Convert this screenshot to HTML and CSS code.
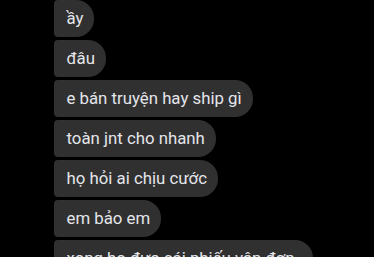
FILE: index.html
```html
<!DOCTYPE html>
<html>
  <head>
    <meta charset="utf-8">
    <title>Tin nhắn</title>
    <link rel="stylesheet" href="styles.css">
  </head>
  <body>
    <div class="thread">
      <div class="msg">ầy</div>
      <div class="msg">đâu</div>
      <div class="msg">e bán truyện hay ship gì</div>
      <div class="msg">toàn jnt cho nhanh</div>
      <div class="msg">họ hỏi ai chịu cước</div>
      <div class="msg">em bảo em</div>
      <div class="msg msg-wide">xong họ đưa cái phiếu vận đơn</div>
    </div>
  </body>
</html>
```

FILE: styles.css
```css
*, *::before, *::after {
  padding: 0;
  margin: 0;
  box-sizing: border-box;
}

body {
  background: #000;
  font-family: Roboto, "Noto Sans", sans-serif;
  height: 257px;
  overflow: hidden;
}

.thread {
  display: flex;
  flex-direction: column;
  align-items: flex-start;
  gap: 3px;
  padding-left: 54px;
  margin-top: -0.5px;
}

.msg {
  height: 37px;
  line-height: 37px;
  padding: 0 11px 0 12.5px;
  background: #303030;
  color: #e4e6eb;
  font-size: 16.8px;
  border-radius: 4px 18px 18px 4px;
  white-space: nowrap;
}

.msg-wide {padding-right: 19px;}
```
